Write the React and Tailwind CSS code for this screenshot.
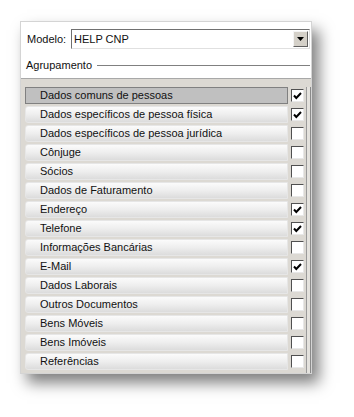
import React from 'react';

const ITEMS = [
  ['Dados comuns de pessoas', true],
  ['Dados específicos de pessoa física', true],
  ['Dados específicos de pessoa jurídica', false],
  ['Cônjuge', false],
  ['Sócios', false],
  ['Dados de Faturamento', false],
  ['Endereço', true],
  ['Telefone', true],
  ['Informações Bancárias', false],
  ['E-Mail', true],
  ['Dados Laborais', false],
  ['Outros Documentos', false],
  ['Bens Móveis', false],
  ['Bens Imóveis', false],
  ['Referências', false],
];

function Check({ on }) {
  return (
    <div className="w-[13px] h-[13px] bg-white border border-t-[#505050] border-l-[#505050] border-r-[#e8e8e8] border-b-[#e8e8e8] flex items-center justify-center">
      {on && (
        <svg width="9" height="8" viewBox="0 0 9 8">
          <path d="M1 3.5 L3.3 6 L8 1" stroke="#000" strokeWidth="2" fill="none" />
        </svg>
      )}
    </div>
  );
}

export default function App() {
  return (
    <div className="w-[354px] h-[417px] bg-white pt-[21px] pl-[20px]" style={{ fontFamily: '"Liberation Sans", Arial, sans-serif' }}>
      <div className="w-[292px] h-[353px] bg-white border border-[#d4d4d4] shadow-[7px_9px_14px_rgba(0,0,0,0.5)] flex flex-col text-[11px] text-[#111]">
        {/* Modelo */}
        <div className="flex items-center pt-[7px] pl-[6px] pr-[1px]">
          <span className="w-[44px]">Modelo:</span>
          <div className="flex-1 h-[20px] border border-t-[#707070] border-l-[#707070] border-r-[#e0e0e0] border-b-[#e0e0e0] flex items-center bg-white">
            <span className="flex-1 pl-[2px]">HELP CNP</span>
            <div className="w-[15px] h-[16px] mr-[1px] bg-[#d4d0c8] border border-t-[#f4f4f4] border-l-[#f4f4f4] border-r-[#606060] border-b-[#606060] flex items-center justify-center">
              <svg width="7" height="4" viewBox="0 0 7 4">
                <path d="M0 0 H7 L3.5 4 Z" fill="#000" />
              </svg>
            </div>
          </div>
        </div>
        {/* Agrupamento */}
        <div className="flex items-center pl-[5px] pr-[1px] mt-[9px] h-[14px]">
          <span>Agrupamento</span>
          <div className="flex-1 ml-[5px] h-px bg-[#808080]" />
        </div>
        {/* list */}
        <div className="mt-[6px] flex-1 bg-[#dcd9d3] border-t border-[#a8a8a8] flex pl-[4px] pt-[8px]">
          <div className="flex-1 flex flex-col gap-[2px]">
            {ITEMS.map(([label, on], i) => (
              <div key={label} className="flex items-center h-[17px]">
                <div
                  className={
                    i === 0
                      ? 'w-[263px] h-[17px] bg-[#c0c0c0] border border-[#808080] pl-[14px] flex items-center'
                      : 'w-[263px] h-[17px] rounded-l-[3px] bg-gradient-to-b from-[#fbfbfb] via-[#eeeeee] to-[#dcdcdc] border border-[#e6e6e6] pl-[14px] flex items-center'
                  }
                >
                  {label}
                </div>
                <div className="ml-[3px]">
                  <Check on={on} />
                </div>
              </div>
            ))}
          </div>
          <div className="w-[6px] ml-[2px] bg-[#e4e2dd] border-l border-[#9a9a9a] border-r border-r-[#8a8a8a]" />
        </div>
      </div>
    </div>
  );
}
